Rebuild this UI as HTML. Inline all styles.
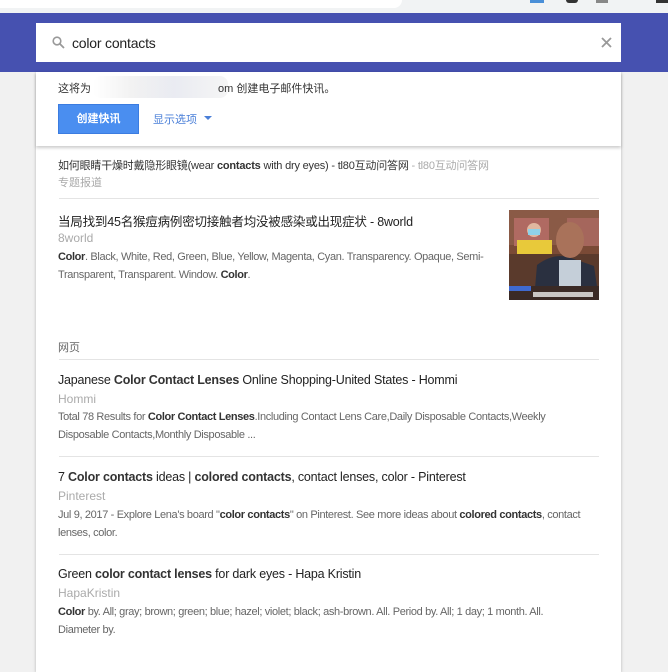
<!DOCTYPE html>
<html><head><meta charset="utf-8"><style>
*{margin:0;padding:0;box-sizing:border-box}
body{width:668px;height:639px;overflow:hidden;background:#f1f1f1;font-family:"Liberation Sans","Noto Sans CJK SC",sans-serif;position:relative;color:#222}
.a{position:absolute;white-space:nowrap}
.chrome{left:0;top:0;width:668px;height:13px;background:#f1f3f4}
.tab{left:0;top:0;width:402px;height:8px;background:#fff;border-radius:0 0 10px 0}
.bar{left:0;top:13px;width:668px;height:59px;background:#4651b0}
.search{left:36px;top:23px;width:585px;height:39px;background:#fff}
.card{left:36px;top:72px;width:585px;height:600px;background:#fff;box-shadow:0 1px 3px rgba(0,0,0,.25)}
.sep{position:absolute;left:59px;width:540px;height:1px;background:#e4e4e4}
.t{font-size:12.5px;color:#222;letter-spacing:-0.2px}
.s{font-size:11px;color:#666;line-height:18px;letter-spacing:-0.35px}
.src{font-size:12px;color:#aaa}
b{color:#333}
</style></head><body>
<div class="a chrome"></div>
<div class="a tab"></div>
<div class="a" style="left:530px;top:0;width:14px;height:3px;background:#4a8fd8"></div>
<div class="a" style="left:566px;top:0;width:12px;height:3px;background:#333;border-radius:0 0 6px 6px"></div>
<div class="a" style="left:596px;top:0;width:12px;height:3px;background:#888"></div>
<div class="a" style="left:656px;top:0;width:12px;height:3px;background:#333"></div>
<div class="a bar"></div>
<div class="a card"></div>
<div class="a" style="left:36px;top:72px;width:585px;height:74px;box-shadow:0 2px 3px rgba(0,0,0,.2);background:#fff"></div>
<div class="a search"></div>
<svg class="a" style="left:52px;top:36px" width="13" height="13" viewBox="0 0 13 13"><circle cx="5" cy="5" r="3.8" fill="none" stroke="#999" stroke-width="1.6"/><path d="M8 8l4 4" stroke="#999" stroke-width="1.8"/></svg>
<div class="a" style="left:72px;top:35px;font-size:14px;color:#222;letter-spacing:-0.2px">color contacts</div>
<svg class="a" style="left:601px;top:37px" width="11" height="11" viewBox="0 0 11 11"><path d="M1 1l9 9M10 1l-9 9" stroke="#999" stroke-width="1.8"/></svg>
<div class="a" style="left:58px;top:80px;font-size:11px;color:#333">这将为</div>
<div class="a" style="left:93px;top:76px;width:135px;height:22px;background:linear-gradient(90deg,#fff,#eee 30%,#e4e6ee 60%,#f3f3f3);opacity:.8;border-radius:8px"></div>
<div class="a" style="left:218px;top:80px;font-size:11px;color:#333">om 创建电子邮件快讯。</div>
<div class="a" style="left:58px;top:104px;width:81px;height:30px;background:#4a8ef0;border:1px solid #3b7ce0;color:#fff;font-size:11px;font-weight:bold;text-align:center;line-height:28px">创建快讯</div>
<div class="a" style="left:153px;top:111px;font-size:11px;color:#4a7fd8">显示选项</div>
<div class="a" style="left:204px;top:116px;width:0;height:0;border-left:4px solid transparent;border-right:4px solid transparent;border-top:4px solid #4a7fd8"></div>

<div class="a" style="left:58px;top:157px;font-size:11px;color:#333;letter-spacing:-0.2px">如何眼睛干燥时戴隐形眼镜(wear <b>contacts</b> with dry eyes) - tl80互动问答网 <span style="color:#aaa">- tl80互动问答网</span></div>
<div class="a" style="left:58px;top:174px;font-size:11px;color:#aaa">专题报道</div>
<div class="sep" style="top:198px"></div>

<div class="a t" style="left:58px;top:211px">当局找到45名猴痘病例密切接触者均没被感染或出现症状 - 8world</div>
<div class="a src" style="left:58px;top:231px">8world</div>
<div class="a s" style="left:58px;top:248px"><b>Color</b>. Black, White, Red, Green, Blue, Yellow, Magenta, Cyan. Transparency. Opaque, Semi-<br>Transparent, Transparent. Window. <b>Color</b>.</div>
<svg class="a" style="left:509px;top:210px" width="90" height="90" viewBox="0 0 90 90">
<rect width="90" height="90" fill="#7a4a36"/><rect y="0" width="90" height="35" fill="#8a5a46"/>
<rect x="5" y="8" width="35" height="28" fill="#b06a62"/><rect x="58" y="8" width="32" height="28" fill="#a5665c"/>
<rect x="8" y="30" width="35" height="14" fill="#e8c93a"/><circle cx="25" cy="20" r="7" fill="#e0b8a0"/><rect x="19" y="19" width="12" height="6" fill="#8fd2e8"/>
<rect x="0" y="44" width="90" height="46" fill="#5a3a2c"/>
<path d="M25 90 L28 55 Q45 42 62 48 L85 56 L90 90Z" fill="#2a3040"/>
<rect x="50" y="50" width="22" height="40" fill="#c5cfd9"/>
<ellipse cx="61" cy="30" rx="14" ry="18" fill="#a9725a"/>
<rect x="0" y="76" width="90" height="14" fill="#3a2a26"/><rect x="0" y="76" width="22" height="5" fill="#3f6ad0"/>
<rect x="24" y="82" width="60" height="5" fill="#eee" opacity=".8"/>
</svg>

<div class="a" style="left:58px;top:339px;font-size:11px;color:#666">网页</div>
<div class="sep" style="top:359px"></div>

<div class="a t" style="left:58px;top:373px">Japanese <b>Color Contact Lenses</b> Online Shopping-United States - Hommi</div>
<div class="a src" style="left:58px;top:392px">Hommi</div>
<div class="a s" style="left:58px;top:408px">Total 78 Results for <b>Color Contact Lenses</b>.Including Contact Lens Care,Daily Disposable Contacts,Weekly<br>Disposable Contacts,Monthly Disposable ...</div>
<div class="sep" style="top:456px"></div>

<div class="a t" style="left:58px;top:470px">7 <b>Color contacts</b> ideas | <b>colored contacts</b>, contact lenses, color - Pinterest</div>
<div class="a src" style="left:58px;top:489px">Pinterest</div>
<div class="a s" style="left:58px;top:506px">Jul 9, 2017 - Explore Lena's board "<b>color contacts</b>" on Pinterest. See more ideas about <b>colored contacts</b>, contact<br>lenses, color.</div>
<div class="sep" style="top:554px"></div>

<div class="a t" style="left:58px;top:567px">Green <b>color contact lenses</b> for dark eyes - Hapa Kristin</div>
<div class="a src" style="left:58px;top:586px">HapaKristin</div>
<div class="a s" style="left:58px;top:603px"><b>Color</b> by. All; gray; brown; green; blue; hazel; violet; black; ash-brown. All. Period by. All; 1 day; 1 month. All.<br>Diameter by.</div>
</body></html>
